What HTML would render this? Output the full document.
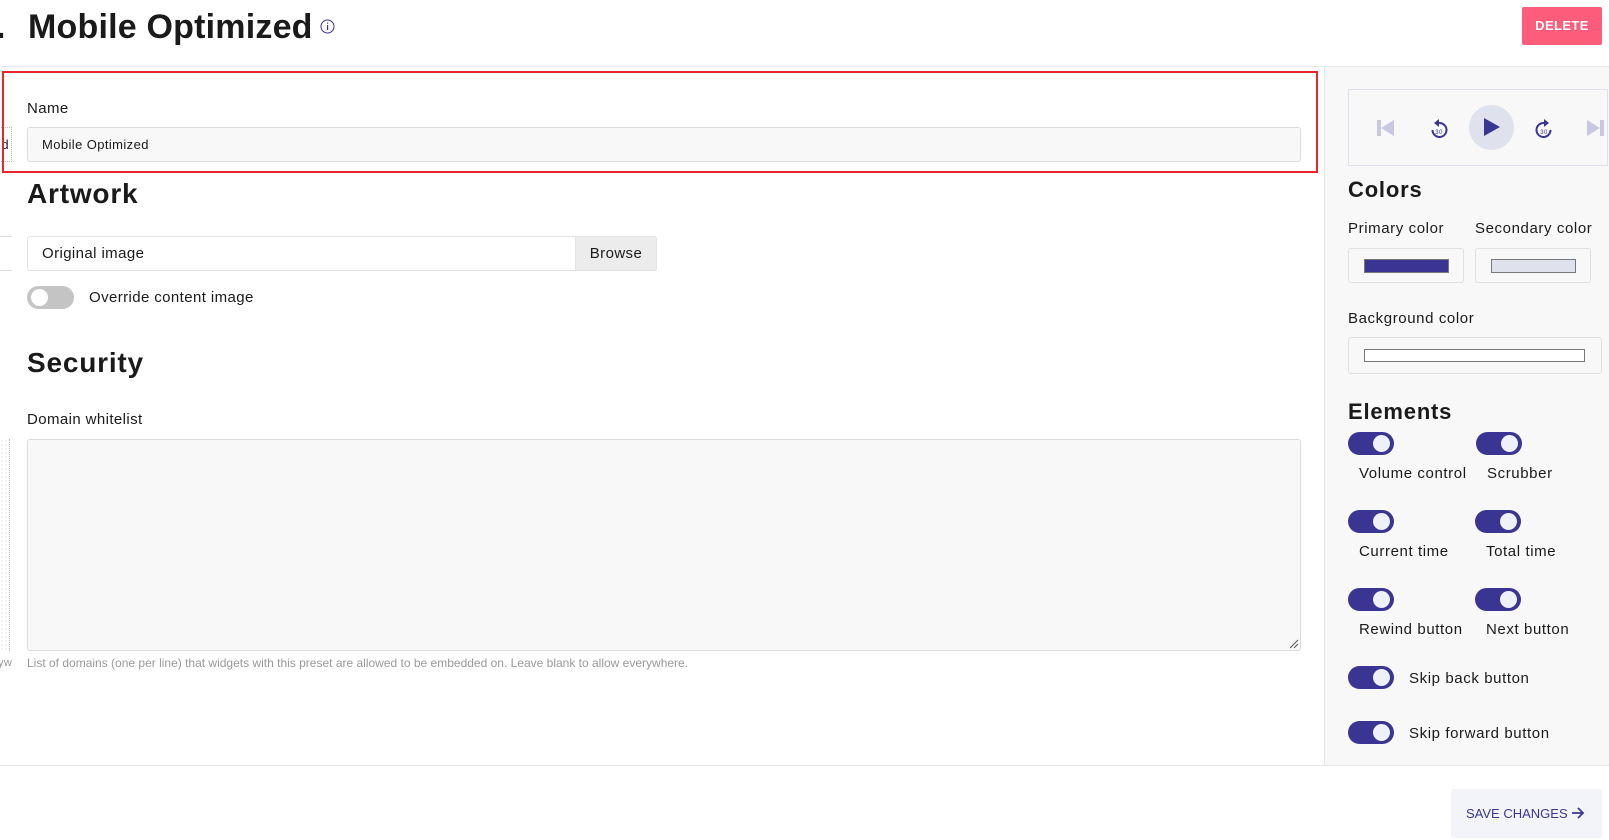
<!DOCTYPE html>
<html><head><meta charset="utf-8"><style>
*{box-sizing:border-box;margin:0;padding:0}
body{width:1609px;height:840px;overflow:hidden;background:#fff;font-family:"Liberation Sans",sans-serif;color:#1a1a1a;position:relative;letter-spacing:0.4px}
.a{position:absolute}
.tog{position:absolute;width:46px;height:23px;border-radius:12px;background:#3a3592}
.tog::after{content:"";position:absolute;right:4px;top:3px;width:17px;height:17px;border-radius:50%;background:#eef0fa}
.lbl{position:absolute;font-size:15px;color:#1a1a1a;letter-spacing:0.6px}
h2{position:absolute;font-weight:bold;letter-spacing:0.8px}
</style></head><body>
<div class="a" style="left:-4px;top:8px;font-size:34px;font-weight:bold">.</div>
<div class="a" style="left:28px;top:8px;font-size:34px;font-weight:bold;letter-spacing:0.2px">Mobile Optimized</div>
<svg class="a" style="left:320px;top:19px" width="15" height="15" viewBox="0 0 15 15"><circle cx="7.5" cy="7.5" r="6.5" fill="none" stroke="#3a3592" stroke-width="1"/><rect x="7" y="6" width="1.2" height="5" fill="#3a3592"/><rect x="7" y="3.5" width="1.2" height="1.2" fill="#3a3592"/></svg>
<div class="a" style="left:1522px;top:7px;width:80px;height:38px;background:#fd5c7a;border-radius:2px;color:#fff;font-size:13px;font-weight:bold;text-align:center;line-height:38px">DELETE</div>
<div class="a" style="left:0;top:66px;width:1609px;height:1px;background:#e6e6ea"></div>

<div class="a" style="left:1324px;top:67px;width:285px;height:698px;background:#f8f8f8;border-left:1px solid #e6e6ea"></div>
<div class="a" style="left:0;top:765px;width:1609px;height:1px;background:#e6e6ea"></div>

<div class="a" style="left:-2px;top:127px;width:14px;height:35px;border:1px dotted #bbb;font-size:13px;line-height:33px;text-align:right;padding-right:2px">d</div>
<div class="a" style="left:0;top:236px;width:12px;height:35px;border-top:1px solid #ddd;border-bottom:1px solid #ddd"></div>
<div class="a" style="left:0;top:439px;width:10px;height:212px;border-right:1px dotted #bbb;background-image:radial-gradient(#ccc 0.6px,transparent 0.8px);background-size:4px 4px"></div>
<div class="a" style="left:-2px;top:657px;font-size:11px;color:#999">yw</div>

<div class="a" style="left:2px;top:71px;width:1316px;height:102px;border:2px solid #e8252a"></div>
<div class="a" style="left:27px;top:100px;font-size:15px">Name</div>
<div class="a" style="left:27px;top:127px;width:1274px;height:35px;background:#f8f8f8;border:1px solid #dcdcdc;border-radius:3px;font-size:13px;line-height:33px;padding-left:14px">Mobile Optimized</div>

<h2 style="left:27px;top:178px;font-size:28px">Artwork</h2>
<div class="a" style="left:27px;top:236px;width:630px;height:35px;border:1px solid #e2e2e2;border-radius:3px;font-size:15px;line-height:33px;padding-left:14px">Original image</div>
<div class="a" style="left:575px;top:236px;width:82px;height:35px;background:#ececec;border:1px solid #e2e2e2;border-radius:0 3px 3px 0;font-size:15px;line-height:33px;text-align:center">Browse</div>
<div class="a" style="left:27px;top:286px;width:47px;height:23px;border-radius:12px;background:#c4c4c4"></div>
<div class="a" style="left:31px;top:289px;width:17px;height:17px;border-radius:50%;background:#fff"></div>
<div class="a" style="left:89px;top:289px;font-size:15px">Override content image</div>

<h2 style="left:27px;top:347px;font-size:28px">Security</h2>
<div class="a" style="left:27px;top:411px;font-size:15px">Domain whitelist</div>
<div class="a" style="left:27px;top:439px;width:1274px;height:212px;background:#f8f8f8;border:1px solid #dcdcdc;border-radius:3px"></div>
<svg class="a" style="left:1289px;top:639px" width="10" height="10"><path d="M1 9L9 1M5 9L9 5" stroke="#555" stroke-width="1"/></svg>
<div class="a" style="left:27px;top:656px;font-size:12px;color:#999;letter-spacing:0">List of domains (one per line) that widgets with this preset are allowed to be embedded on. Leave blank to allow everywhere.</div>

<div class="a" style="left:1348px;top:89px;width:260px;height:77px;border:1px solid #dedff0"></div>
<svg class="a" style="left:1377px;top:119px" width="18" height="18"><rect x="0" y="1" width="4" height="16" fill="#c8c8e2"/><path d="M17 1V17L4 9Z" fill="#c8c8e2"/></svg>
<svg class="a" style="left:1430px;top:119px" width="18" height="20" viewBox="0 0 18 20"><path d="M9 4A7 7 0 1 1 2.5 11" fill="none" stroke="#3a3592" stroke-width="2"/><path d="M9 0V8L4 4Z" fill="#3a3592"/><text x="9" y="15" font-size="6" text-anchor="middle" fill="#3a3592" font-family="Liberation Sans">30</text></svg>
<div class="a" style="left:1469px;top:105px;width:45px;height:45px;border-radius:50%;background:#dfe2ed"></div>
<svg class="a" style="left:1484px;top:118px" width="16" height="18"><path d="M0 0V18L16 9Z" fill="#3a3592"/></svg>
<svg class="a" style="left:1535px;top:119px" width="18" height="20" viewBox="0 0 18 20"><path d="M9 4A7 7 0 1 0 15.5 11" fill="none" stroke="#3a3592" stroke-width="2"/><path d="M9 0V8L14 4Z" fill="#3a3592"/><text x="9" y="15" font-size="6" text-anchor="middle" fill="#3a3592" font-family="Liberation Sans">30</text></svg>
<svg class="a" style="left:1587px;top:119px" width="18" height="18"><path d="M0 1V17L13 9Z" fill="#c8c8e2"/><rect x="13" y="1" width="4" height="16" fill="#c8c8e2"/></svg>

<h2 style="left:1348px;top:177px;font-size:22px">Colors</h2>
<div class="lbl" style="left:1348px;top:220px">Primary color</div>
<div class="lbl" style="left:1475px;top:220px">Secondary color</div>
<div class="a" style="left:1348px;top:248px;width:116px;height:35px;border:1px solid #e0e0e0;border-radius:3px"></div>
<div class="a" style="left:1364px;top:259px;width:85px;height:14px;background:#3a3592;border:1px solid #777"></div>
<div class="a" style="left:1475px;top:248px;width:116px;height:35px;border:1px solid #e0e0e0;border-radius:3px"></div>
<div class="a" style="left:1491px;top:259px;width:85px;height:14px;background:#dfe2ed;border:1px solid #777"></div>
<div class="lbl" style="left:1348px;top:310px">Background color</div>
<div class="a" style="left:1348px;top:337px;width:254px;height:37px;border:1px solid #e0e0e0;border-radius:3px"></div>
<div class="a" style="left:1364px;top:349px;width:221px;height:13px;background:#fff;border:1px solid #777"></div>

<h2 style="left:1348px;top:399px;font-size:22px">Elements</h2>
<div class="tog" style="left:1348px;top:432px"></div><div class="tog" style="left:1476px;top:432px"></div>
<div class="lbl" style="left:1359px;top:465px">Volume control</div><div class="lbl" style="left:1487px;top:465px">Scrubber</div>
<div class="tog" style="left:1348px;top:510px"></div><div class="tog" style="left:1475px;top:510px"></div>
<div class="lbl" style="left:1359px;top:543px">Current time</div><div class="lbl" style="left:1486px;top:543px">Total time</div>
<div class="tog" style="left:1348px;top:588px"></div><div class="tog" style="left:1475px;top:588px"></div>
<div class="lbl" style="left:1359px;top:621px">Rewind button</div><div class="lbl" style="left:1486px;top:621px">Next button</div>
<div class="tog" style="left:1348px;top:666px"></div><div class="lbl" style="left:1409px;top:670px">Skip back button</div>
<div class="tog" style="left:1348px;top:721px"></div><div class="lbl" style="left:1409px;top:725px">Skip forward button</div>

<div class="a" style="left:1451px;top:789px;width:151px;height:49px;background:#f3f4f9;border-radius:3px;color:#3a3592;font-size:13px;line-height:49px;padding-left:15px;letter-spacing:0">SAVE CHANGES</div>
<svg class="a" style="left:1571px;top:806px" width="14" height="14"><path d="M1 7H12M7 2L12 7L7 12" fill="none" stroke="#3a3592" stroke-width="1.8"/></svg>
</body></html>
